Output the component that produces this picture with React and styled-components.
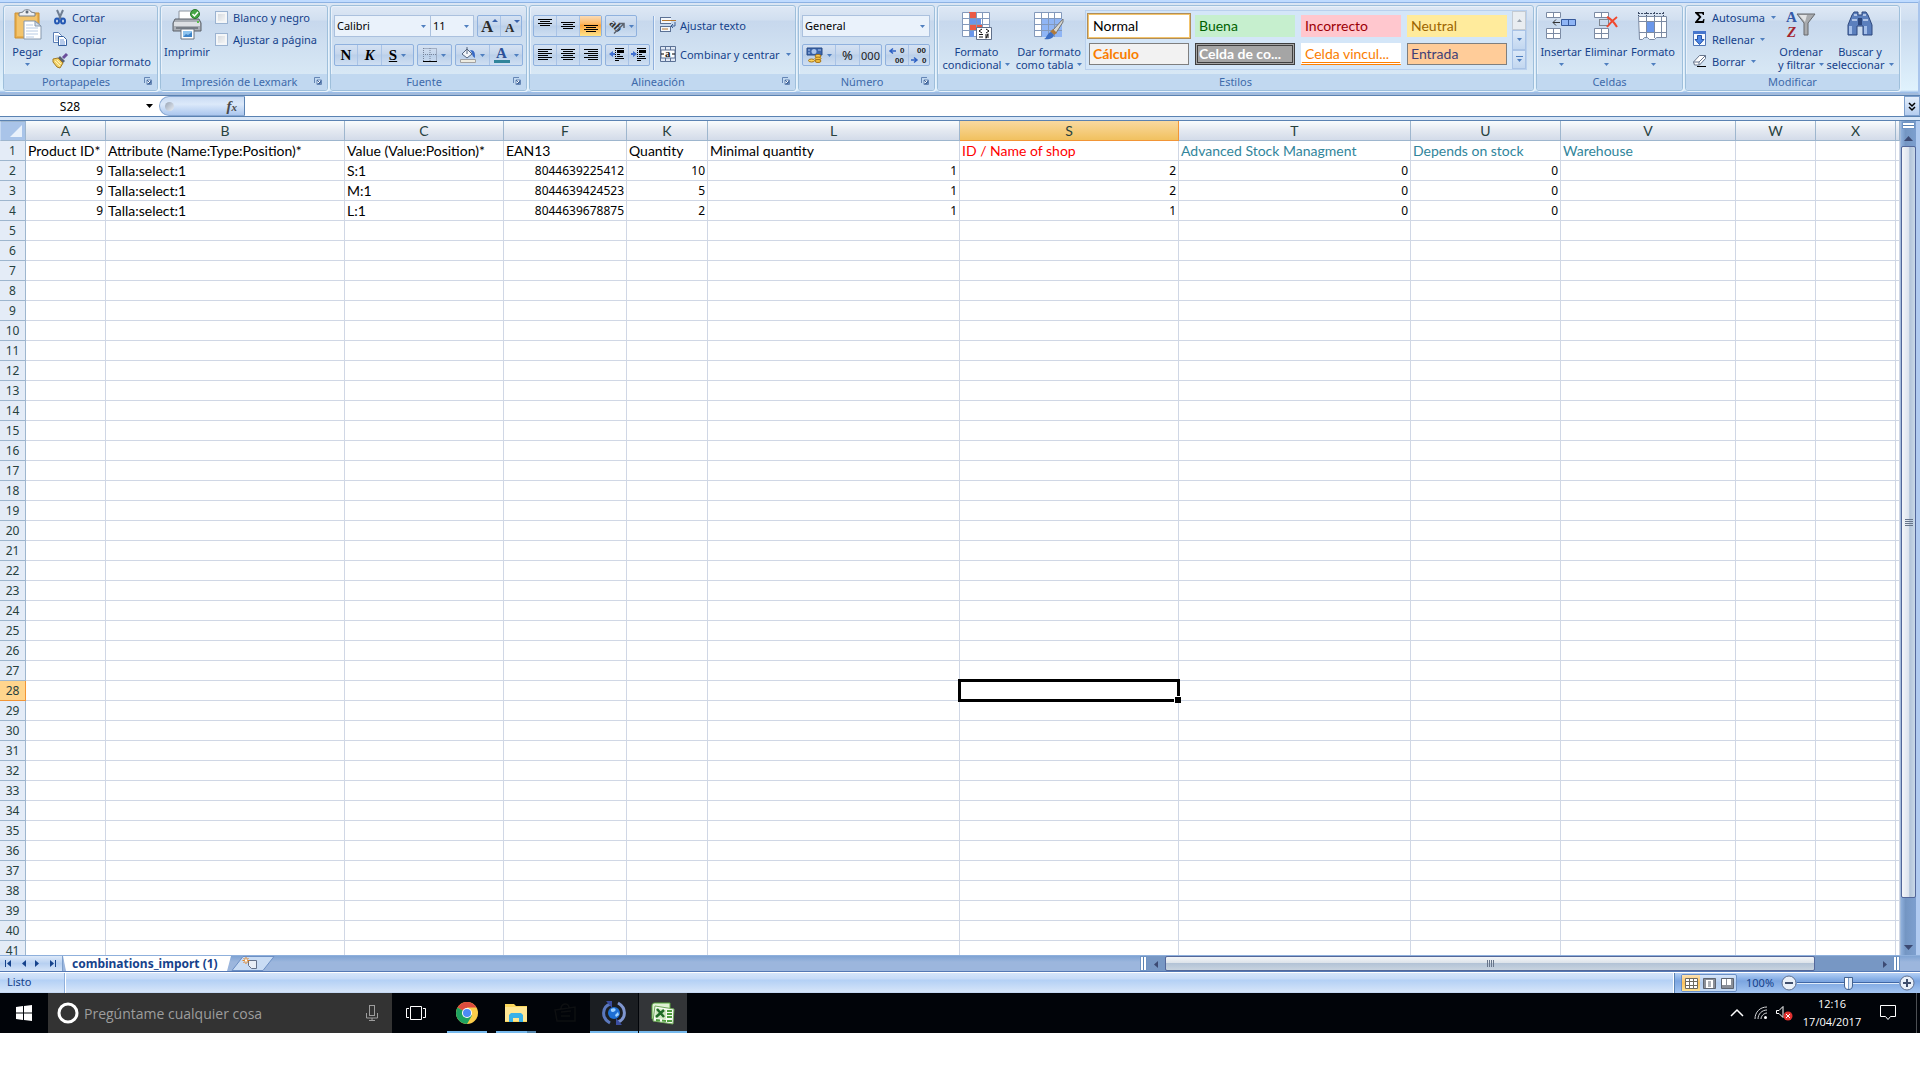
import React from 'react'
import styled, { createGlobalStyle, css } from 'styled-components'

const GlobalStyle = createGlobalStyle`
    * {
        box-sizing: border-box;
    }

    body {
        margin: 0;
        background: #fff;
        overflow: hidden;
    }

    button,
    input,
    select {
        font: inherit;
        color: inherit;
        margin: 0;
        padding: 0;
        border: 0;
        background: none;
        border-radius: 0;
    }

    svg {
        display: block;
        flex: none;
        overflow: visible;
    }
`

const Window = styled.div`
    display: flex;
    flex-direction: column;
    height: calc(100vh - 47px);
    font-family: 'Noto Sans', 'Open Sans', sans-serif;
    font-size: 11px;
    line-height: 13px;
    color: #15428b;
`

/* ---------- ribbon ---------- */

const Ribbon = styled.header`
    display: flex;
    gap: 2px;
    flex: none;
    height: 95px;
    padding: 2px 0 2px 3px;
    border-top: 2px solid #bfdbff;
    border-right: 2px solid #a9c5ec;
    border-bottom: 2px solid #a3bbdb;
    background: linear-gradient(#8db2e3 0 1px, #dbe6f4 1px, #cfdff1 18px, #c7d8ed 19px, #e0f2fd 88px, #8db2e3 91px);
`

const GroupBox = styled.section`
    display: flex;
    flex-direction: column;
    flex: none;
    width: ${(p) => p.$width}px;
    height: 86px;
    margin-top: 1px;
    border: 1px solid #9ebfdb;
    border-radius: 3px;
    box-shadow: inset 1px 1px 0 #e9f1fa, 1px 1px 0 #e9f3fc;
    background: linear-gradient(#dee8f5, #d1dff0 14px, #c7d8ed 15px, #d8e8f5 69px);
    overflow: hidden;
`

const GroupBody = styled.div`
    display: flex;
    height: 68px;
    padding: ${(p) => p.$pad};
`

const GroupFooter = styled.footer`
    display: flex;
    align-items: center;
    flex: 1;
    padding: 0 4px 2px;
    background: #c1d8f0;
    color: #3e6aaa;

    span {
        flex: 1;
        text-align: center;
    }
`

const LauncherButton = styled.button`
    width: 9px;
    height: 9px;
`

const BigButton = styled.button`
    display: flex;
    flex-direction: column;
    align-items: center;
    flex: none;
    width: ${(p) => p.$width}px;
    height: 66px;
    padding-top: 2px;
    white-space: nowrap;
    text-align: center;
`

const IconSlot = styled.span`
    flex: none;
    height: ${(p) => (p.$tall ? 36 : 33)}px;
`

const BigLine = styled.span`
    display: flex;
    align-items: center;
    justify-content: center;
    gap: 4px;
    height: 13px;
`

const Stack = styled.div`
    display: flex;
    flex-direction: column;
    gap: ${(p) => p.$gap || 0}px;
    margin-left: ${(p) => p.$indent || 0}px;
`

const SmallButton = styled.button`
    display: flex;
    align-items: center;
    gap: 4px;
    height: 22px;
    padding-bottom: 2px;
    white-space: nowrap;

    svg:last-child {
        margin-left: ${(p) => (p.$menu ? 2 : 0)}px;
    }
`

const CheckLabel = styled.label`
    display: flex;
    align-items: center;
    gap: 5px;
    height: 22px;
    padding-bottom: 2px;
    white-space: nowrap;
`

const Check = styled.input`
    appearance: none;
    width: 13px;
    height: 13px;
    border: 1px solid #9bb3d1;
    background: linear-gradient(135deg, #cfd4da, #fbfbfb);
    box-shadow: inset 0 0 0 2px #f4f6f8;
`

const Row = styled.div`
    display: flex;
    gap: 3px;
    height: 22px;
`

const Segment = styled.div`
    display: flex;
    height: 22px;
    border: 1px solid #8fb1de;
    border-radius: 2px;
    background: linear-gradient(#d5e2f3, #c5d6ec 45%, #bacfe9 50%, #cfdff2);
`

const Tool = styled.button`
    display: flex;
    align-items: center;
    justify-content: center;
    gap: 4px;
    width: ${(p) => p.$width}px;
    color: #000;

    & + & {
        border-left: 1px solid #a9c3e6;
    }

    ${(p) =>
        p.$active &&
        css`
            background: linear-gradient(#fbdbb5, #fdb762 40%, #fda33b 45%, #fee48a);
        `}
`

const SelectBox = styled.div`
    display: flex;
    align-items: center;
    width: ${(p) => p.$width}px;
    height: 22px;
    padding-right: 4px;
    border: 1px solid #abc1de;
    background: #eaf2fb;
    color: #000;

    & + & {
        margin-left: -4px;
    }

    select {
        appearance: none;
        flex: 1;
        min-width: 0;
        height: 20px;
        padding: 0 0 2px 2px;
    }
`

const Divider = styled.div`
    width: 1px;
    height: 54px;
    margin: 1px 6px 0 3px;
    background: #8fb0dc;
    box-shadow: 1px 0 0 #e8f1fb;
`

const Gallery = styled.div`
    display: flex;
    flex: 1;
    height: 60px;
    border: 1px solid #b9d0ed;
    background: #d4e6f8;
`

const GalleryGrid = styled.div`
    display: grid;
    grid-template-columns: repeat(4, 100px);
    grid-auto-rows: 22px;
    gap: 6px;
    flex: 1;
    padding: 4px 3px;
`

const StyleCell = styled.button`
    padding: 0 3px 2px;
    border: 1px solid ${(p) => p.$border || p.$bg};
    background: ${(p) => p.$bg};
    color: ${(p) => p.$color};
    font-family: Lato, sans-serif;
    font-size: 14px;
    font-weight: ${(p) => (p.$bold ? 700 : 400)};
    text-align: left;
    white-space: nowrap;

    ${(p) =>
        p.$kind === 'current' &&
        css`
            box-shadow: 0 0 0 1px #f3c46b, 0 0 0 2px #b08d5a;
        `}
    ${(p) =>
        p.$kind === 'check' &&
        css`
            box-shadow: inset 0 0 0 1px #a5a5a5, inset 0 0 0 2px #3f3f3f;
        `}
    ${(p) =>
        p.$kind === 'linked' &&
        css`
            border-bottom: 3px double #ff8001;
            padding-bottom: 0;
        `}
`

const GalleryScroll = styled.div`
    display: grid;
    grid-template-rows: repeat(3, 1fr);
    width: 14px;

    button {
        display: flex;
        align-items: center;
        justify-content: center;
        border: 1px solid #a9c3e6;
        background: linear-gradient(#dce9f8, #c2d7f0);
    }

    button:first-child {
        background: #e9edf1;
        border-color: #c4cbd3;
    }
`

/* ---------- formula bar ---------- */

const FormulaBar = styled.div`
    display: flex;
    flex: none;
    height: 22px;
    border-top: 1px solid #5a82b2;
    border-bottom: 1px solid #5a82b2;
    background: #fff;
    color: #000;
`

const NameBox = styled.div`
    display: flex;
    align-items: center;
    width: 158px;
    padding-right: 5px;

    input {
        flex: 1;
        min-width: 0;
        padding-right: 6px;
        text-align: center;
        font-size: 12px;
    }
`

const FxArea = styled.div`
    display: flex;
    align-items: center;
    justify-content: space-between;
    width: 86px;
    margin-left: 1px;
    padding: 0 7px 0 5px;
    border: 1px solid #8aa9d3;
    border-right-color: #5a82b2;
    border-radius: 10px 0 0 10px;
    background: linear-gradient(#c9dbf3, #dce9fa 40%, #abc7ee);
`

const Knob = styled.span`
    width: 9px;
    height: 9px;
    border-radius: 50%;
    background: linear-gradient(135deg, #98a4b5, #e9eef5);
`

const FxButton = styled.button`
    font: italic 700 15px/18px 'Liberation Serif', serif;
    color: #4a4a4a;

    small {
        font-size: 11px;
    }
`

const FormulaInput = styled.input`
    flex: 1;
    min-width: 0;
`

const ExpandButton = styled.button`
    display: flex;
    align-items: center;
    justify-content: center;
    width: 16px;
    border: 1px solid #7d9fcc;
    background: linear-gradient(#e4eefb, #b5cdef);
`

const BarGap = styled.div`
    flex: none;
    height: 4px;
    border-bottom: 1px solid #5a82b2;
    background: #d8e6f7;
`

/* ---------- sheet ---------- */

const SheetArea = styled.main`
    display: flex;
    flex: 1;
    min-height: 0;
    border-right: 4px solid #b0caf0;
`

const SheetView = styled.div`
    flex: 1;
    min-width: 0;
    overflow: hidden;
`

const Sheet = styled.table`
    width: 100%;
    table-layout: fixed;
    border-collapse: separate;
    border-spacing: 0;
    font-family: Lato, sans-serif;
    font-size: 14px;
    line-height: 19px;
    color: #000;
`

const ColHead = styled.th`
    height: 20px;
    padding: 0;
    border-right: 1px solid ${(p) => (p.$active ? '#f29536' : '#9eb6ce')};
    border-bottom: 1px solid ${(p) => (p.$active ? '#f29536' : '#9eb6ce')};
    background: ${(p) => (p.$active ? 'linear-gradient(#f9d99f, #f1c15f)' : 'linear-gradient(#f9fcfd, #e4e9f1 50%, #d3dbe9)')};
    font-weight: 400;
    color: #27413e;
`

const Corner = styled.td`
    padding: 0;
    border: 1px solid #9eb6ce;
    border-left-color: #c4d8f2;
    background: #a9c4e9;

    svg {
        margin: 0 3px 0 auto;
    }
`

const RowHead = styled.th`
    height: 20px;
    padding: 1px 0 0;
    border-right: 1px solid ${(p) => (p.$active ? '#f29536' : '#9eb6ce')};
    border-bottom: 1px solid ${(p) => (p.$active ? '#f29536' : '#9eb6ce')};
    background: ${(p) => (p.$active ? '#ffd58d' : '#e4ecf7')};
    font-family: 'Noto Sans', sans-serif;
    font-size: 12px;
    font-weight: 400;
    line-height: 18px;
    color: #27413e;
`

const Cell = styled.td`
    position: relative;
    height: 20px;
    padding: 1px 2px 0;
    border-right: 1px solid #d0d7e5;
    border-bottom: 1px solid #d0d7e5;
    line-height: 18px;
    text-align: left;
    white-space: nowrap;
    color: ${(p) => p.$color || '#000'};

    ${(p) =>
        p.$number &&
        css`
            font-family: 'Noto Sans', sans-serif;
            font-size: 12px;
            text-align: right;
        `}
`

const Selection = styled.div`
    position: absolute;
    inset: -2px;
    z-index: 1;
    border: 3px solid #000;

    &::after {
        content: '';
        position: absolute;
        right: -4px;
        bottom: -4px;
        width: 6px;
        height: 6px;
        border: solid #fff;
        border-width: 1px 0 0 1px;
        background: #000;
    }
`

const VScroll = styled.div`
    display: flex;
    flex-direction: column;
    align-items: center;
    flex: none;
    width: 16px;
    border-left: 1px solid #a3bbdb;
    background: linear-gradient(90deg, #8fb0dc, #7496c3 30%, #7d9fcf);
`

const SplitHandle = styled.div`
    width: 13px;
    height: 7px;
    margin: 1px 0;
    border: 1px solid #6f94c4;
    background: linear-gradient(#fff 0 2px, #5a82b2 2px 3px, #fff 3px);
`

const ArrowButton = styled.button`
    display: flex;
    align-items: center;
    justify-content: center;
    flex: none;
    width: 16px;
    height: 16px;
`

const VThumb = styled.div`
    display: flex;
    flex-direction: column;
    align-items: center;
    justify-content: center;
    gap: 1px;
    flex: 751;
    width: 15px;
    border: 1px solid #53679a;
    border-radius: 2px;
    background: linear-gradient(90deg, #f4f6f9, #dde4ee 50%, #b2c4d9 60%, #c9d8e8);

    i {
        width: 8px;
        height: 1px;
        background: #68758a;
    }
`

const Spacer = styled.div`
    flex: ${(p) => p.$grow || 1};
`

/* ---------- sheet tabs ---------- */

const TabBar = styled.nav`
    display: flex;
    flex: none;
    height: 17px;
    padding-right: 20px;
    border-top: 1px solid #8fb0dc;
    border-bottom: 1px solid #5478b4;
    background: linear-gradient(#7fa3d3, #9cb6dd 6px);
`

const TabNav = styled.div`
    display: flex;
    align-items: center;
    justify-content: space-between;
    width: 63px;
    padding: 0 4px 0 3px;
    border-right: 1px solid #7d9fcc;
    background: linear-gradient(#dde9f9, #b7d0f1 50%, #d5e4f8);

    button {
        padding: 2px;
    }
`

const SheetTab = styled.button`
    width: 168px;
    padding-left: 9px;
    background: #fff;
    clip-path: polygon(0 0, 100% 0, 164px 100%, 3px 100%);
    font-size: 12px;
    font-weight: 700;
    line-height: 15px;
    text-align: left;
    white-space: nowrap;
    color: #15428b;
`

const HScroll = styled.div`
    display: flex;
    align-items: stretch;
    width: 760px;
    background: #7797c4;
`

const SideHandle = styled.div`
    flex: none;
    width: 7px;
    border: 1px solid #6f94c4;
    background: linear-gradient(90deg, #fff 0 2px, #5a82b2 2px 3px, #fff 3px);
`

const HThumb = styled.div`
    display: flex;
    align-items: center;
    justify-content: center;
    gap: 1px;
    width: 650px;
    margin-left: 2px;
    border: 1px solid #53679a;
    border-radius: 2px;
    background: linear-gradient(#f4f6f8, #dde3ea 45%, #b3c3d6 50%, #c8d3df);

    i {
        width: 1px;
        height: 7px;
        background: #68758a;
    }
`

/* ---------- status bar ---------- */

const StatusBar = styled.div`
    display: flex;
    flex: none;
    height: 21px;
    border-top: 1px solid #fff;
    background: linear-gradient(#d5e5fa, #c5daf7 6px, #b3d0f5 7px, #d6e5f9 19px, #b5cdef);
    line-height: 17px;
`

const StatusText = styled.div`
    width: 65px;
    padding-left: 7px;
    border-right: 1px solid #8fb0dc;
    box-shadow: 1px 0 0 #fff;
`

const StatusTools = styled.div`
    display: flex;
    align-items: center;
    width: 246px;
    padding-left: 6px;
    border-left: 1px solid #5a82b2;
    box-shadow: -1px 0 0 #fff;
    background: linear-gradient(#b5d0f5, #88b0e6 6px, #7ba5e0 8px, #a4c5f1);
`

const ViewGroup = styled.div`
    display: flex;
    width: 56px;
    height: 18px;
    margin-right: 9px;
    border: 1px solid #6a8fc5;
    border-radius: 2px;
    background: linear-gradient(#d6e5f9, #b3cdf0 50%, #c3d9f5);

    button {
        display: flex;
        align-items: center;
        justify-content: center;
        flex: 1;
    }

    button:first-child {
        background: linear-gradient(#fde2b2, #fbc15b 50%, #fde292);
    }
`

const ZoomText = styled.span`
    width: 35px;
    padding-bottom: 2px;
`

const ZoomRange = styled.input`
    appearance: none;
    width: 102px;
    height: 16px;
    background: linear-gradient(transparent 7px, #3f67a5 7px 8px, #e1edfb 8px 9px, transparent 9px);

    &::-webkit-slider-thumb {
        appearance: none;
        width: 9px;
        height: 13px;
        border: 1px solid #44638f;
        border-radius: 1px 1px 5px 5px;
        background: linear-gradient(90deg, #fff 3px, #7d9fcc 3px 4px, #dbe7f6 4px);
    }
`

/* ---------- windows taskbar ---------- */

const Taskbar = styled.footer`
    display: flex;
    flex: none;
    height: 40px;
    background: #010409;
    font-family: 'Open Sans', sans-serif;
    color: #fff;
`

const TaskButton = styled.button`
    display: flex;
    align-items: center;
    justify-content: center;
    width: 48px;
    margin-right: ${(p) => p.$gap || 0}px;
    background: ${(p) => p.$bg || 'none'};
    box-shadow: ${(p) => (p.$full ? 'inset 0 -2px 0 #76b9ed' : 'none')};
`

const RunMark = styled.span`
    display: flex;
    flex-direction: column;
    align-items: center;
    justify-content: center;
    width: 40px;
    height: 40px;
    background: ${(p) =>
        p.$stacked
            ? 'linear-gradient(90deg, #76b9ed 31px, #5386ad 31px) bottom / 100% 2px no-repeat'
            : 'linear-gradient(#76b9ed, #76b9ed) bottom / 100% 2px no-repeat'};
`

const Search = styled.label`
    display: flex;
    align-items: center;
    gap: 5px;
    width: 344px;
    padding: 0 14px 0 9px;
    background: #333;

    input {
        flex: 1;
        min-width: 0;
        font-size: 14px;
    }

    input::placeholder {
        color: #9d9d9d;
        opacity: 1;
    }
`

const Tray = styled.div`
    display: flex;
    align-items: center;
    gap: 8px;
    margin-left: auto;
    width: 192px;
    padding-right: 3px;

    button {
        display: flex;
        align-items: center;
        justify-content: center;
    }

    button:first-child {
        width: 18px;
    }
`

const Clock = styled.time`
    width: 62px;
    font-size: 11px;
    line-height: 18px;
    text-align: center;
`

const NoticeButton = styled.button`
    flex: 1;
    height: 40px;
    padding-right: 12px;
    border-right: 1px solid #4c4f53;
`

/* ---------- drawings ---------- */

const Icon = ({ w = 16, h = w, children }) => (
    <svg width={w} height={h} viewBox={`0 0 ${w} ${h}`} fill="none" aria-hidden="true">
        {children}
    </svg>
)

const Arrow = ({ color = '#4f7fbf' }) => (
    <Icon w={5} h={3}>
        <path d="M0 0h5L2.500 3z" fill={color} />
    </Icon>
)

const Launcher = () => (
    <Icon w={8}>
        <path d="M.5 6V.5H6" stroke="#6586b5" />
        <path d="M3 3h4.500v4.500H3z" fill="#fff" stroke="#6586b5" />
        <path d="M3 3l3 3M6.500 3.500v3h-3" stroke="#44699e" />
    </Icon>
)

const PasteIcon = () => (
    <Icon w={28} h={32}>
        <path d="M1 4h24v25H1z" fill="#e9b04e" stroke="#cb8f33" />
        <path d="M3 6h20v21H3z" fill="#f3c46c" />
        <path d="M5 7V4l4-1c0-3 8-3 8 0l4 1v3z" fill="#eceff3" stroke="#77808c" />
        <circle cx="13" cy="3" r="1.500" fill="#5f6a77" />
        <path d="M10 12h11l6 5v13H10z" fill="#fff" stroke="#8597ad" />
        <path d="M21 12v5h6z" fill="#d4deea" stroke="#8597ad" />
        <path d="M12 16h7M12 19h12M12 22h12M12 25h12M12 28h8" stroke="#b8cbe4" />
    </Icon>
)

const ScissorsIcon = () => (
    <Icon>
        <path d="M5 1l4 9M11 1L7 10" stroke="#6f7e92" strokeWidth="2" />
        <ellipse cx="5" cy="12" rx="2" ry="2.500" stroke="#2458b3" strokeWidth="2" />
        <ellipse cx="11" cy="12" rx="2" ry="2.500" stroke="#2458b3" strokeWidth="2" />
    </Icon>
)

const CopyIcon = () => (
    <Icon>
        <path d="M1.500 1.500h5l3 3v7h-8z" fill="#fff" stroke="#5a7db4" />
        <path d="M3 5h4M3 7h4M3 9h4" stroke="#86a8db" />
        <path d="M6.500 5.500h5l3 3v6h-8z" fill="#fff" stroke="#35609f" />
        <path d="M8 9h4M8 11h5M8 13h5" stroke="#6f97d6" />
    </Icon>
)

const BrushIcon = () => (
    <Icon>
        <path d="M11 5l4-4" stroke="#6a4e9c" strokeWidth="3" />
        <path d="M8 3l5 5-2 2-5-5z" fill="#596272" />
        <path d="M1 6l5-1 5 5-3 5-3-1-4-5z" fill="#f2d269" stroke="#a27a24" />
        <path d="M3 8l5 5M5 7l4 4" stroke="#fff3bd" />
    </Icon>
)

const PrinterIcon = () => (
    <Icon w={30} h={32}>
        <path d="M7 12V2h14l2 3v7z" fill="#fff" stroke="#8c949e" />
        <path d="M3 10h24l2 4v8H1v-8z" fill="#a9aeb5" stroke="#5a6068" />
        <path d="M2 13h26v4H2z" fill="#dde0e4" />
        <path d="M4 18h22v2H4z" fill="#777d85" />
        <path d="M25 12h2v2h-2z" fill="#5bc04b" />
        <path d="M9 20h13v10H9z" fill="#fff" stroke="#6b7480" />
        <path d="M11 22h9v6h-9z" fill="#8fc4ee" />
        <path d="M11 28l3-3 2 1 4-3v5z" fill="#3f84c8" />
        <circle cx="23" cy="5" r="4.500" fill="#46a646" stroke="#2c7a30" />
        <path d="M20.500 5l2 2 3.500-4" stroke="#fff" strokeWidth="1.500" />
    </Icon>
)

const Bars = ({ rows, y = 2 }) => (
    <Icon>
        {rows.map(([x, w], i) => (
            <path key={i} d={`M${x} ${y + i * 2 + 0.5}h${w}`} stroke="#000" />
        ))}
    </Icon>
)

const FULL = [1, 14]
const SHORT = [3, 10]

const ResizeIcon = ({ size, up }) => (
    <Icon w={18} h={20}>
        <text x={up ? 1 : 3} y="16" fontFamily="Liberation Serif" fontSize={size} fontWeight="700" fill="#2b2b2b">
            A
        </text>
        <path d={up ? 'M12 6h6l-3-3z' : 'M12 4h6l-3 3z'} fill="#3a62ab" />
    </Icon>
)

const IndentIcon = ({ flip }) => (
    <Icon>
        <path d="M6 1.500h9M8 3.500h7M8 7.500h3M8 9.500h6M6 11.500h9M6 13.500h4" stroke="#000" />
        <path d="M8 5h7" stroke="#000" strokeWidth="2" />
        <path d="M6.500 1v14" stroke="#000" strokeDasharray="1 1" />
        <path d={flip ? 'M0 6h2V4l4 3-4 3V8H0z' : 'M6 6H4V4L0 7l4 3V8h2z'} fill="#3f6fd0" />
    </Icon>
)

const OrientationIcon = () => (
    <Icon>
        <text x="1" y="9" fontFamily="Liberation Serif" fontSize="12" fontWeight="700" fill="#333" transform="rotate(45 4 6)">
            ab
        </text>
        <path d="M5 15.500L15 5.500M15 10V5.500h-4.500" stroke="#5c6470" strokeWidth="1.500" />
    </Icon>
)

const WrapIcon = () => (
    <Icon>
        <path d="M0 .5h11M0 6.500h11M0 9.500h11M0 14.500h11M.5 1v5M.5 10v4M10.500 10v4" stroke="#5b7195" />
        <path d="M1 1h10v5H1zM1 10h9v4H1z" fill="#f4f7fb" />
        <path d="M2 3.500h14M2 12h6" stroke="#b4762e" />
        <path d="M15 5v4h-3M13 7l-2 2 2 2" stroke="#3c5f95" />
    </Icon>
)

const MergeIcon = () => (
    <Icon>
        <path d="M.5 .5h15v15H.5z" fill="#dfe8f5" stroke="#5b7195" />
        <path d="M5.500 1v3M10.500 1v3M5.500 12v3M10.500 12v3" stroke="#5b7195" />
        <path d="M1 4h14v8H1z" fill="#fff" stroke="#5b7195" />
        <path d="M1 8h3M12 8h3" stroke="#000" />
        <text x="5" y="11" fontFamily="Liberation Serif" fontSize="11" fontWeight="700" fill="#222">
            a
        </text>
    </Icon>
)

const BorderIcon = () => (
    <Icon w={14}>
        <path d="M.5 .5h13v12M.5 0v13M7 0v13M0 6.500h14" stroke="#76839a" strokeDasharray="1 1" />
        <path d="M0 13.500h14" stroke="#000" />
    </Icon>
)

const FillIcon = () => (
    <Icon>
        <path d="M2 7l5-5 5 5-5 4z" fill="#f2f5f9" stroke="#54657f" />
        <path d="M7 7V0" stroke="#54657f" />
        <path d="M10 3c5 0 5 3 5 8-2-1-3-3-3-5z" fill="#3768c4" />
        <path d="M.5 12.500h15v3H.5z" fill="#eeece1" stroke="#a2a2a2" />
    </Icon>
)

const CurrencyIcon = () => (
    <Icon w={17} h={16}>
        <path d="M1 1h15v7H1z" fill="#3e67ab" stroke="#274a86" />
        <circle cx="8" cy="4.500" r="2.500" fill="#a9c4ec" />
        <path d="M2 3h2M12 3h3M2 6h2" stroke="#a9c4ec" />
        <ellipse cx="12" cy="9" rx="3" ry="1.500" fill="#ffd45c" stroke="#a5741a" />
        <ellipse cx="12" cy="11.500" rx="3" ry="1.500" fill="#f5c03d" stroke="#a5741a" />
        <ellipse cx="12" cy="14" rx="3" ry="1.500" fill="#f5c03d" stroke="#a5741a" />
        <ellipse cx="5.500" cy="13.500" rx="3" ry="1.500" fill="#ffd45c" stroke="#a5741a" />
    </Icon>
)

const DecimalIcon = ({ less }) => (
    <Icon w={16} h={20}>
        <g fontFamily="Liberation Sans" fontSize="8" fontWeight="700" fill="#222">
            <text x={less ? 6 : 11} y="8">
                {less ? '00' : '0'}
            </text>
            <text x={less ? 11 : 6} y="18">
                {less ? '0' : '00'}
            </text>
        </g>
        <path d={less ? 'M0 15h5M3 12.500l3 2.500-3 2.500' : 'M7 6H2M4 3.500L1 6l3 2.500'} stroke="#2f62c4" strokeWidth="1.500" />
    </Icon>
)

const GridBase = ({ children }) => (
    <>
        <path d="M.5 .5h27v24H.5z" fill="#fff" stroke="#8399bb" />
        {children}
        <path d="M7.500 1v24M14.500 1v24M20.500 1v24M0 6.500h28M0 12.500h28M0 18.500h28" stroke="#8399bb" />
    </>
)

const ConditionalIcon = () => (
    <Icon w={30} h={30}>
        <GridBase>
            <path d="M7 0h7v7H7zM7 13h13v6H7z" fill="#ec5a44" />
            <path d="M7 7h12v6H7zM7 19h5v6H7z" fill="#6a97ea" />
        </GridBase>
        <path d="M14.500 15.500h15v12h-15z" fill="#fff" stroke="#60708a" />
        <path d="M20 17l-3 2 3 2M17 22.500h4M17 25h4M24 17l3 2-3 2M23 23h4M23 25h4M26 21.500l-2 5" stroke="#111" />
    </Icon>
)

const TableFormatIcon = () => (
    <Icon w={30} h={30}>
        <GridBase>
            <path d="M7 7h21v18H7z" fill="#8fb5f5" />
        </GridBase>
        <path d="M29 7l-10 11 3 3 7-11z" fill="#d8d8d2" stroke="#747474" />
        <path d="M19 17l4 4-3 2-4-3z" fill="#b07a3b" />
        <path d="M10 27c3-1 3-6 7-7l3 3c-1 4-6 5-10 4z" fill="#3d6fc4" />
    </Icon>
)

const MiniCells = ({ x }) => (
    <path
        d={`M${x} .5h14v5h-14zM${x + 7} .5v5M${x} 16.500h14v5h-14zM${x + 7} 16.500v5M${x} 21.500h14v5h-14zM${x + 7} 21.500v5`}
        fill="#fff"
        stroke="#7b8aa3"
    />
)

const InsertIcon = () => (
    <Icon w={30} h={30}>
        <MiniCells x={0.5} />
        <path d="M15.500 7.500h14v6h-14z" fill="#8fb5f5" stroke="#36599b" />
        <path d="M22.500 8v6" stroke="#36599b" />
        <path d="M14 10.500H7M10 7.500l-3 3 3 3" stroke="#333" />
    </Icon>
)

const DeleteIcon = () => (
    <Icon w={30} h={30}>
        <MiniCells x={3.5} />
        <path d="M8.500 7.500h9v6h-9z" stroke="#333" strokeDasharray="1 1" />
        <path d="M16 5c4 2 7 5 10 10M26 5c-4 3-7 6-10 10" stroke="#f0492e" strokeWidth="2" />
    </Icon>
)

const FormatIcon = () => (
    <Icon w={32} h={30}>
        <path d="M1 1.500h26M1.500 0v4M9.500 0v4M17.500 0v4M26.500 0v4" stroke="#3d4c66" strokeDasharray="2 1" />
        <path d="M1.500 4.500h28v21h-10l-2 2h-5l-2-2h-3l-2 2h-3z" fill="#fff" stroke="#7b8aa3" />
        <path d="M9 10h8v10H9z" fill="#6a97ea" />
        <path d="M9.500 5v21M17.500 5v21M24.500 5v21M2 9.500h28M2 20.500h28" stroke="#7b8aa3" />
    </Icon>
)

const SumIcon = () => (
    <Icon>
        <path d="M3 3h9v3h-1l-1-1.500H6.500L9.500 8l-3.500 4h4.500l1-2h1l-.5 4H3v-1l4-5-4-4z" fill="#000" />
    </Icon>
)

const FillDownIcon = () => (
    <Icon>
        <path d="M1.500 .5h12v14h-12z" fill="#f4f8fe" stroke="#4f76b6" />
        <path d="M1 0h13v3H1z" fill="#4676cd" />
        <path d="M5.500 4.500h4v4H12l-4.500 5L3 8.500h2.500z" fill="#4d86e6" stroke="#2453a5" />
    </Icon>
)

const EraserIcon = () => (
    <Icon>
        <path d="M1.500 9l6-6.500h6v3l-6 6.500h-5z" fill="#fff" stroke="#67758c" />
        <path d="M1.500 9h5.500v3M7 9l6.500-6.500" stroke="#67758c" />
        <path d="M5 13.500h9" stroke="#000" />
    </Icon>
)

const SortIcon = () => (
    <Icon w={30} h={30}>
        <text x="0" y="13" fontFamily="Liberation Serif" fontSize="15" fontWeight="700" fill="#3359a8">
            A
        </text>
        <text x="1" y="28" fontFamily="Liberation Serif" fontSize="15" fontWeight="700" fontStyle="italic" fill="#a3242c">
            Z
        </text>
        <path d="M11 5h18l-7 9v12h-4V14z" fill="#a9abae" stroke="#66696d" />
        <path d="M13 6h8l-2 7z" fill="#e2e3e5" />
    </Icon>
)

const BinocularsIcon = () => (
    <Icon w={28} h={28}>
        <path d="M8 3h4v3h4V3h4l2 3 4 10v10h-9v-9h-6v9H2V16L6 6z" fill="#5b7fbd" stroke="#2c467c" />
        <path d="M8 6h3M17 6h3M6 11h5M17 11h5" stroke="#cddcf4" strokeWidth="1.500" />
        <path d="M3 17h3v8H3zM18 17h3v8h-3z" fill="#a4bfea" />
        <path d="M12 9h4v7h-4z" fill="#2c467c" />
    </Icon>
)

const NavArrow = ({ left, bar, color = '#15428b' }) => (
    <Icon w={7} h={7}>
        <path d={left ? 'M6 0v7L2 3.500z' : 'M1 0v7l4-3.500z'} fill={color} />
        {bar && <path d={left ? 'M.5 0v7' : 'M6.500 0v7'} stroke={color} />}
    </Icon>
)

const NewTabIcon = () => (
    <Icon w={44} h={15}>
        <path d="M1 14.500L12 .5h31L32 14.500z" fill="#c9dcf4" stroke="#6c8fc4" />
        <path d="M17.500 4.500h8v8h-5l-3-3z" fill="#e9eef6" stroke="#63718a" />
        <path d="M15 1v7M11.500 4.500h7M12.500 2l5 5M17.500 2l-5 5" stroke="#e2811c" />
        <circle cx="15" cy="4.500" r="1.200" fill="#fff" />
    </Icon>
)

const ZoomIcon = ({ plus }) => (
    <Icon w={16}>
        <circle cx="8" cy="8" r="7" fill="#e9f0f9" stroke="#5d6f90" />
        <path d={plus ? 'M4 8h8M8 4v8' : 'M4 8h8'} stroke="#3f4e6c" strokeWidth="2" />
    </Icon>
)

const ChromeIcon = () => (
    <Icon w={22}>
        <circle cx="11" cy="11" r="11" fill="#fccd4a" />
        <path d="M11 11L1.500 5.500A11 11 0 0 1 20.500 5.500H11z" fill="#dd4b3e" />
        <path d="M11 11L1.500 5.500A11 11 0 0 0 11 22l5-8.500z" fill="#1da260" />
        <circle cx="11" cy="11" r="5" fill="#fff" />
        <circle cx="11" cy="11" r="4" fill="#4c8bf5" />
    </Icon>
)

const FolderIcon = () => (
    <Icon w={22} h={20}>
        <path d="M0 1h9l2 2h11v16H0z" fill="#fbd75b" />
        <path d="M0 4h22v14H0z" fill="#ffe794" />
        <path d="M4 19v-7l2-2h10l2 2v7h-4v-4H8v4z" fill="#38b0e8" />
    </Icon>
)

const BagIcon = () => (
    <Icon w={24} h={22}>
        <path d="M2 8l20-3v14H4zM8 7c0-6 8-7 8-1M8 10l10-1M8 14h9" stroke="#0d0f11" strokeWidth="1.500" />
    </Icon>
)

const SyncIcon = () => (
    <Icon w={26}>
        <path d="M9 23C0 18 1 7 9 4" stroke="#5b78bd" strokeWidth="3" />
        <path d="M17 3c9 5 8 16 0 19" stroke="#7f96d0" strokeWidth="3" />
        <path d="M5 1h6v7zM21 25h-6v-7z" fill="#3a4da0" />
        <circle cx="13" cy="13" r="6" fill="#1e6fd4" />
        <path d="M10 9c3-2 6 0 4 2s-5 1-4-2zM14 15l3-3 1 3-3 2z" fill="#9fd2ff" />
    </Icon>
)

const ExcelIcon = () => (
    <Icon w={24} h={23}>
        <path d="M1 4c0-3 2-3 4-3h14v16H1z" fill="#dff0d4" stroke="#58a83c" />
        <path d="M4 4l19 3-1 15-20-3z" fill="#f6fbf3" stroke="#71a95c" />
        <path d="M5 6l10 2v9L4 16z" fill="#cfe7c0" />
        <path d="M6 7l7 8M13 8l-8 7" stroke="#1f6a26" strokeWidth="2.500" />
        <path d="M16 9h5M16 12h5M16 15h5M5 18l4 .5M11 18.500l4 .5M16 19h5" stroke="#4f9d3e" strokeWidth="2" />
    </Icon>
)

/* ---------- data ---------- */

const COLUMNS = [
    ['A', 80],
    ['B', 239],
    ['C', 159],
    ['F', 123],
    ['K', 81],
    ['L', 252],
    ['S', 219],
    ['T', 232],
    ['U', 150],
    ['V', 175],
    ['W', 80],
    ['X', 80],
]

const TEAL = '#31859b'

const HEADERS = [
    ['Product ID*'],
    ['Attribute (Name:Type:Position)*'],
    ['Value (Value:Position)*'],
    ['EAN13'],
    ['Quantity'],
    ['Minimal quantity'],
    ['ID / Name of shop', '#ff0000'],
    ['Advanced Stock Managment', TEAL],
    ['Depends on stock', TEAL],
    ['Warehouse', TEAL],
]

const ROWS = [
    [9, 'Talla:select:1', 'S:1', 8044639225412, 10, 1, 2, 0, 0],
    [9, 'Talla:select:1', 'M:1', 8044639424523, 5, 1, 2, 0, 0],
    [9, 'Talla:select:1', 'L:1', 8044639678875, 2, 1, 1, 0, 0],
]

const ROW_COUNT = 41
const ACTIVE_ROW = 28
const ACTIVE_COL = 'S'

const STYLES = [
    { name: 'Normal', bg: '#fff', color: '#000', kind: 'current' },
    { name: 'Buena', bg: '#c6efce', color: '#006100' },
    { name: 'Incorrecto', bg: '#ffc7ce', color: '#9c0006' },
    { name: 'Neutral', bg: '#ffeb9c', color: '#9c6500' },
    { name: 'Cálculo', bg: '#f2f2f2', color: '#fa7d00', border: '#7f7f7f', bold: true },
    { name: 'Celda de co...', bg: '#a5a5a5', color: '#fff', border: '#3f3f3f', bold: true, kind: 'check' },
    { name: 'Celda vincul...', bg: '#fff', color: '#fa7d00', kind: 'linked' },
    { name: 'Entrada', bg: '#ffcc99', color: '#3f3f76', border: '#7f7f7f' },
]

/* ---------- parts ---------- */

const Group = ({ title, width, pad, launcher, children }) => (
    <GroupBox $width={width}>
        <GroupBody $pad={pad}>{children}</GroupBody>
        <GroupFooter>
            <span>{title}</span>
            {launcher && (
                <LauncherButton aria-label={title}>
                    <Launcher />
                </LauncherButton>
            )}
        </GroupFooter>
    </GroupBox>
)

const Big = ({ icon, lines, width, tall, plain }) => (
    <BigButton $width={width}>
        <IconSlot $tall={tall}>{icon}</IconSlot>
        {lines.map((line, i) => (
            <BigLine key={line}>
                {line}
                {i === 1 && <Arrow />}
            </BigLine>
        ))}
        {lines.length === 1 && !plain && (
            <BigLine>
                <Arrow />
            </BigLine>
        )}
    </BigButton>
)

const Small = ({ icon, children, menu }) => (
    <SmallButton $menu={menu}>
        {icon}
        {children}
        {menu && <Arrow />}
    </SmallButton>
)

const Combo = ({ label, value, width }) => (
    <SelectBox $width={width}>
        <select aria-label={label}>
            <option>{value}</option>
        </select>
        <Arrow />
    </SelectBox>
)

const Glyph = styled.span`
    font: ${(p) => (p.$italic ? 'italic' : 'normal')} 700 15px/16px 'Liberation Serif', serif;
    text-decoration: ${(p) => (p.$under ? 'underline' : 'none')};
`

const FontColor = styled(Glyph)`
    width: 16px;
    border-bottom: 3px solid #31859b;
    line-height: 13px;
    color: #2c5198;
`

const NumberGlyph = styled.span`
    font-size: ${(p) => p.$size}px;
    color: #222;
`

const RibbonBar = () => (
    <Ribbon>
        <Group title="Portapapeles" width={155} pad="1px 2px 0 5px" launcher>
            <Big icon={<PasteIcon />} lines={['Pegar']} width={37} tall />
            <Stack $indent={6}>
                <Small icon={<ScissorsIcon />}>Cortar</Small>
                <Small icon={<CopyIcon />}>Copiar</Small>
                <Small icon={<BrushIcon />}>Copiar formato</Small>
            </Stack>
        </Group>
        <Group title="Impresión de Lexmark" width={168} pad="1px 3px" launcher>
            <Big icon={<PrinterIcon />} lines={['Imprimir']} width={46} tall plain />
            <Stack $indent={5}>
                <CheckLabel>
                    <Check type="checkbox" />
                    Blanco y negro
                </CheckLabel>
                <CheckLabel>
                    <Check type="checkbox" />
                    Ajustar a página
                </CheckLabel>
            </Stack>
        </Group>
        <Group title="Fuente" width={197} pad="9px 3px 0" launcher>
            <Stack $gap={7}>
                <Row>
                    <Combo label="Fuente" value="Calibri" width={97} />
                    <Combo label="Tamaño" value="11" width={44} />
                    <Segment>
                        <Tool $width={22} aria-label="Aumentar tamaño">
                            <ResizeIcon size={17} up />
                        </Tool>
                        <Tool $width={21} aria-label="Disminuir tamaño">
                            <ResizeIcon size={13} />
                        </Tool>
                    </Segment>
                </Row>
                <Row>
                    <Segment>
                        <Tool $width={22}>
                            <Glyph>N</Glyph>
                        </Tool>
                        <Tool $width={24}>
                            <Glyph $italic>K</Glyph>
                        </Tool>
                        <Tool $width={32}>
                            <Glyph $under>S</Glyph>
                            <Arrow />
                        </Tool>
                    </Segment>
                    <Segment>
                        <Tool $width={33} aria-label="Bordes">
                            <BorderIcon />
                            <Arrow />
                        </Tool>
                    </Segment>
                    <Segment>
                        <Tool $width={33} aria-label="Color de relleno">
                            <FillIcon />
                            <Arrow />
                        </Tool>
                        <Tool $width={33}>
                            <FontColor>A</FontColor>
                            <Arrow />
                        </Tool>
                    </Segment>
                </Row>
            </Stack>
        </Group>
        <Group title="Alineación" width={267} pad="9px 3px 0" launcher>
            <Stack $gap={7}>
                <Row>
                    <Segment>
                        <Tool $width={22} aria-label="Alinear arriba">
                            <Bars rows={[FULL, SHORT, FULL, SHORT]} y={1} />
                        </Tool>
                        <Tool $width={23} aria-label="Alinear en el medio">
                            <Bars rows={[FULL, SHORT, FULL, SHORT]} y={4} />
                        </Tool>
                        <Tool $width={22} $active aria-label="Alinear abajo">
                            <Bars rows={[FULL, SHORT, FULL, SHORT]} y={7} />
                        </Tool>
                    </Segment>
                    <Segment>
                        <Tool $width={30} aria-label="Orientación">
                            <OrientationIcon />
                            <Arrow />
                        </Tool>
                    </Segment>
                </Row>
                <Row>
                    <Segment>
                        <Tool $width={22} aria-label="Alinear a la izquierda">
                            <Bars rows={[[1, 14], [1, 10], [1, 14], [1, 10], [1, 14], [1, 10]]} />
                        </Tool>
                        <Tool $width={23} aria-label="Centrar">
                            <Bars rows={[FULL, SHORT, FULL, SHORT, FULL, SHORT]} />
                        </Tool>
                        <Tool $width={22} aria-label="Alinear a la derecha">
                            <Bars rows={[[1, 14], [5, 10], [1, 14], [5, 10], [1, 14], [5, 10]]} />
                        </Tool>
                    </Segment>
                    <Segment>
                        <Tool $width={22} aria-label="Disminuir sangría">
                            <IndentIcon />
                        </Tool>
                        <Tool $width={21} aria-label="Aumentar sangría">
                            <IndentIcon flip />
                        </Tool>
                    </Segment>
                </Row>
            </Stack>
            <Divider />
            <Stack $gap={7}>
                <Small icon={<WrapIcon />}>Ajustar texto</Small>
                <Small icon={<MergeIcon />} menu>
                    Combinar y centrar
                </Small>
            </Stack>
        </Group>
        <Group title="Número" width={137} pad="9px 3px 0" launcher>
            <Stack $gap={7}>
                <Combo label="Formato de número" value="General" width={128} />
                <Row>
                    <Segment>
                        <Tool $width={32} aria-label="Moneda">
                            <CurrencyIcon />
                            <Arrow />
                        </Tool>
                        <Tool $width={24}>
                            <NumberGlyph $size={13}>%</NumberGlyph>
                        </Tool>
                        <Tool $width={22}>
                            <NumberGlyph $size={11}>000</NumberGlyph>
                        </Tool>
                    </Segment>
                    <Segment>
                        <Tool $width={22} aria-label="Aumentar decimales">
                            <DecimalIcon />
                        </Tool>
                        <Tool $width={21} aria-label="Disminuir decimales">
                            <DecimalIcon less />
                        </Tool>
                    </Segment>
                </Row>
            </Stack>
        </Group>
        <Group title="Estilos" width={597} pad="4px 6px 0 2px">
            <Big icon={<ConditionalIcon />} lines={['Formato', 'condicional']} width={73} />
            <Big icon={<TableFormatIcon />} lines={['Dar formato', 'como tabla']} width={72} />
            <Gallery>
                <GalleryGrid>
                    {STYLES.map((s) => (
                        <StyleCell key={s.name} $bg={s.bg} $color={s.color} $border={s.border} $bold={s.bold} $kind={s.kind}>
                            {s.name}
                        </StyleCell>
                    ))}
                </GalleryGrid>
                <GalleryScroll>
                    <button aria-label="Fila anterior">
                        <Icon w={5} h={3}>
                            <path d="M0 3h5L2.500 0z" fill="#9aa3ad" />
                        </Icon>
                    </button>
                    <button aria-label="Fila siguiente">
                        <Arrow />
                    </button>
                    <button aria-label="Más estilos">
                        <Icon w={7} h={6}>
                            <path d="M0 .5h7" stroke="#4f7fbf" />
                            <path d="M1 3h5L3.500 6z" fill="#4f7fbf" />
                        </Icon>
                    </button>
                </GalleryScroll>
            </Gallery>
        </Group>
        <Group title="Celdas" width={147} pad="4px 2px 0">
            <Big icon={<InsertIcon />} lines={['Insertar']} width={44} />
            <Big icon={<DeleteIcon />} lines={['Eliminar']} width={46} />
            <Big icon={<FormatIcon />} lines={['Formato']} width={48} />
        </Group>
        <Group title="Modificar" width={215} pad="1px 5px 0 6px">
            <Stack>
                <Small icon={<SumIcon />} menu>
                    Autosuma
                </Small>
                <Small icon={<FillDownIcon />} menu>
                    Rellenar
                </Small>
                <Small icon={<EraserIcon />} menu>
                    Borrar
                </Small>
            </Stack>
            <Spacer />
            <Big icon={<SortIcon />} lines={['Ordenar', 'y filtrar']} width={50} tall />
            <Big icon={<BinocularsIcon />} lines={['Buscar y', 'seleccionar']} width={68} tall />
        </Group>
    </Ribbon>
)

const SheetGrid = () => (
    <Sheet>
        <colgroup>
            <col width="26" />
            {COLUMNS.map(([name, width]) => (
                <col key={name} width={width} />
            ))}
            <col />
        </colgroup>
        <thead>
            <tr>
                <Corner>
                    <Icon w={12}>
                        <path d="M12 0v12H0z" fill="#e9f1fb" />
                    </Icon>
                </Corner>
                {COLUMNS.map(([name]) => (
                    <ColHead key={name} scope="col" $active={name === ACTIVE_COL}>
                        {name}
                    </ColHead>
                ))}
                <ColHead />
            </tr>
        </thead>
        <tbody>
            {Array.from({ length: ROW_COUNT }, (_, i) => i + 1).map((row) => (
                <tr key={row}>
                    <RowHead scope="row" $active={row === ACTIVE_ROW}>
                        {row}
                    </RowHead>
                    {COLUMNS.map(([name], c) => {
                        const [title, color] = (row === 1 && HEADERS[c]) || []
                        const value = title ?? ROWS[row - 2]?.[c]
                        return (
                            <Cell key={name} $number={typeof value === 'number'} $color={color}>
                                {value}
                                {row === ACTIVE_ROW && name === ACTIVE_COL && <Selection />}
                            </Cell>
                        )
                    })}
                    <Cell />
                </tr>
            ))}
        </tbody>
    </Sheet>
)

const StatusRow = () => (
    <StatusBar>
        <StatusText>Listo</StatusText>
        <Spacer />
        <StatusTools>
            <ViewGroup>
                <button aria-label="Normal">
                    <Icon w={13} h={11}>
                        <path d="M.5 .5h12v10H.5zM4.500 0v11M8.500 0v11M0 3.500h13M0 7.500h13" fill="#fff" stroke="#6d6a5f" />
                    </Icon>
                </button>
                <button aria-label="Diseño de página">
                    <Icon w={13} h={11}>
                        <path d="M.5 .5h12v10H.5z" fill="#8a8f98" stroke="#5d6470" />
                        <path d="M3 2h7v8H3z" fill="#fff" />
                        <path d="M5 4h3M5 6h3M5 8h3" stroke="#5d6470" />
                    </Icon>
                </button>
                <button aria-label="Vista previa de salto de página">
                    <Icon w={13} h={11}>
                        <path d="M.5 .5h12v10H.5z" fill="#8a8f98" stroke="#5d6470" />
                        <path d="M1 1h4v6H1zM6 1h4v6H6z" fill="#fff" />
                    </Icon>
                </button>
            </ViewGroup>
            <ZoomText>100%</ZoomText>
            <button aria-label="Alejar">
                <ZoomIcon />
            </button>
            <ZoomRange type="range" aria-label="Zoom" />
            <button aria-label="Acercar">
                <ZoomIcon plus />
            </button>
        </StatusTools>
    </StatusBar>
)

const WindowsBar = () => (
    <Taskbar>
        <TaskButton aria-label="Inicio">
            <Icon w={16}>
                <path d="M0 2l7-1v6.500H0zM8 1l8-1v7.500H8zM0 8.500h7V15l-7-1zM8 8.500h8V16l-8-1z" fill="#fff" />
            </Icon>
        </TaskButton>
        <Search>
            <Icon w={22}>
                <circle cx="11" cy="11" r="9" stroke="#fff" strokeWidth="3" />
            </Icon>
            <input placeholder="Pregúntame cualquier cosa" aria-label="Buscar" />
            <Icon w={12} h={18}>
                <rect x="3.500" y="1.500" width="5" height="10" stroke="#9d9d9d" />
                <path d="M.5 9v5h11V9M6 14v3M3 16.500h6" stroke="#9d9d9d" />
            </Icon>
        </Search>
        <TaskButton $gap={3} aria-label="Vista de tareas">
            <Icon w={20} h={14}>
                <path d="M4.500 .5h11v13h-11zM3 2.500H.5v9H3M17 2.500h2.500v9H17" stroke="#fff" />
            </Icon>
        </TaskButton>
        <TaskButton $gap={1} aria-label="Chrome">
            <RunMark>
                <ChromeIcon />
            </RunMark>
        </TaskButton>
        <TaskButton $gap={1} aria-label="Explorador">
            <RunMark $stacked>
                <FolderIcon />
            </RunMark>
        </TaskButton>
        <TaskButton $gap={1} aria-label="Tienda">
            <BagIcon />
        </TaskButton>
        <TaskButton $gap={1} $bg="#1b1e22" $full aria-label="Sincronizar">
            <SyncIcon />
        </TaskButton>
        <TaskButton $bg="#333538" $full aria-label="Excel">
            <ExcelIcon />
        </TaskButton>
        <Tray>
            <button aria-label="Iconos ocultos">
                <Icon w={14} h={8}>
                    <path d="M1 7l6-6 6 6" stroke="#fff" strokeWidth="1.500" />
                </Icon>
            </button>
            <button aria-label="Red">
                <Icon w={14}>
                    <path d="M1 13C1 6 6 1 13 1M4 13c0-5 4-9 9-9M7 13c0-3 3-6 6-6" stroke="#d5d6d8" />
                    <circle cx="11.500" cy="11.500" r="1.500" fill="#fff" />
                </Icon>
            </button>
            <button aria-label="Volumen">
                <Icon w={17} h={16}>
                    <path d="M.5 5.500H3l4-4v11l-4-4H.5z" stroke="#fff" />
                    <circle cx="12" cy="11" r="4.500" fill="#e0302f" />
                    <path d="M10 9l4 4M14 9l-4 4" stroke="#fff" />
                </Icon>
            </button>
            <Clock>
                12:16
                <br />
                17/04/2017
            </Clock>
            <NoticeButton aria-label="Centro de actividades">
                <Icon w={16}>
                    <path d="M.5 .5h15v11h-5L8 14.500l-2.500-3h-5z" stroke="#fff" />
                </Icon>
            </NoticeButton>
        </Tray>
    </Taskbar>
)

const App = () => {
    return (
        <Window>
            <GlobalStyle />
            <RibbonBar />
            <FormulaBar>
                <NameBox>
                    <input aria-label="Cuadro de nombres" defaultValue="S28" />
                    <Icon w={7} h={4}>
                        <path d="M0 0h7L3.500 4z" fill="#000" />
                    </Icon>
                </NameBox>
                <FxArea>
                    <Knob />
                    <FxButton aria-label="Insertar función">
                        f<small>x</small>
                    </FxButton>
                </FxArea>
                <FormulaInput aria-label="Barra de fórmulas" />
                <ExpandButton aria-label="Expandir barra de fórmulas">
                    <Icon w={8} h={9}>
                        <path d="M1 1l3 3 3-3M1 5l3 3 3-3" stroke="#000" strokeWidth="1.500" />
                    </Icon>
                </ExpandButton>
            </FormulaBar>
            <BarGap />
            <SheetArea>
                <SheetView>
                    <SheetGrid />
                </SheetView>
                <VScroll>
                    <SplitHandle />
                    <ArrowButton aria-label="Arriba">
                        <Icon w={9} h={5}>
                            <path d="M0 5h9L4.500 0z" fill="#3c4a73" />
                        </Icon>
                    </ArrowButton>
                    <VThumb>
                        <i />
                        <i />
                        <i />
                        <i />
                    </VThumb>
                    <Spacer $grow={41} />
                    <ArrowButton aria-label="Abajo">
                        <Icon w={9} h={5}>
                            <path d="M0 0h9L4.500 5z" fill="#3c4a73" />
                        </Icon>
                    </ArrowButton>
                </VScroll>
            </SheetArea>
            <TabBar>
                <TabNav>
                    <button aria-label="Primera hoja">
                        <NavArrow left bar />
                    </button>
                    <button aria-label="Hoja anterior">
                        <NavArrow left />
                    </button>
                    <button aria-label="Hoja siguiente">
                        <NavArrow />
                    </button>
                    <button aria-label="Última hoja">
                        <NavArrow bar />
                    </button>
                </TabNav>
                <SheetTab>combinations_import (1)</SheetTab>
                <button aria-label="Insertar hoja de cálculo">
                    <NewTabIcon />
                </button>
                <Spacer />
                <HScroll>
                    <SideHandle />
                    <ArrowButton aria-label="Izquierda">
                        <NavArrow left color="#3c4a73" />
                    </ArrowButton>
                    <HThumb>
                        <i />
                        <i />
                        <i />
                        <i />
                    </HThumb>
                    <Spacer />
                    <ArrowButton aria-label="Derecha">
                        <NavArrow color="#3c4a73" />
                    </ArrowButton>
                    <SideHandle />
                </HScroll>
            </TabBar>
            <StatusRow />
            <WindowsBar />
        </Window>
    )
}

export default App
